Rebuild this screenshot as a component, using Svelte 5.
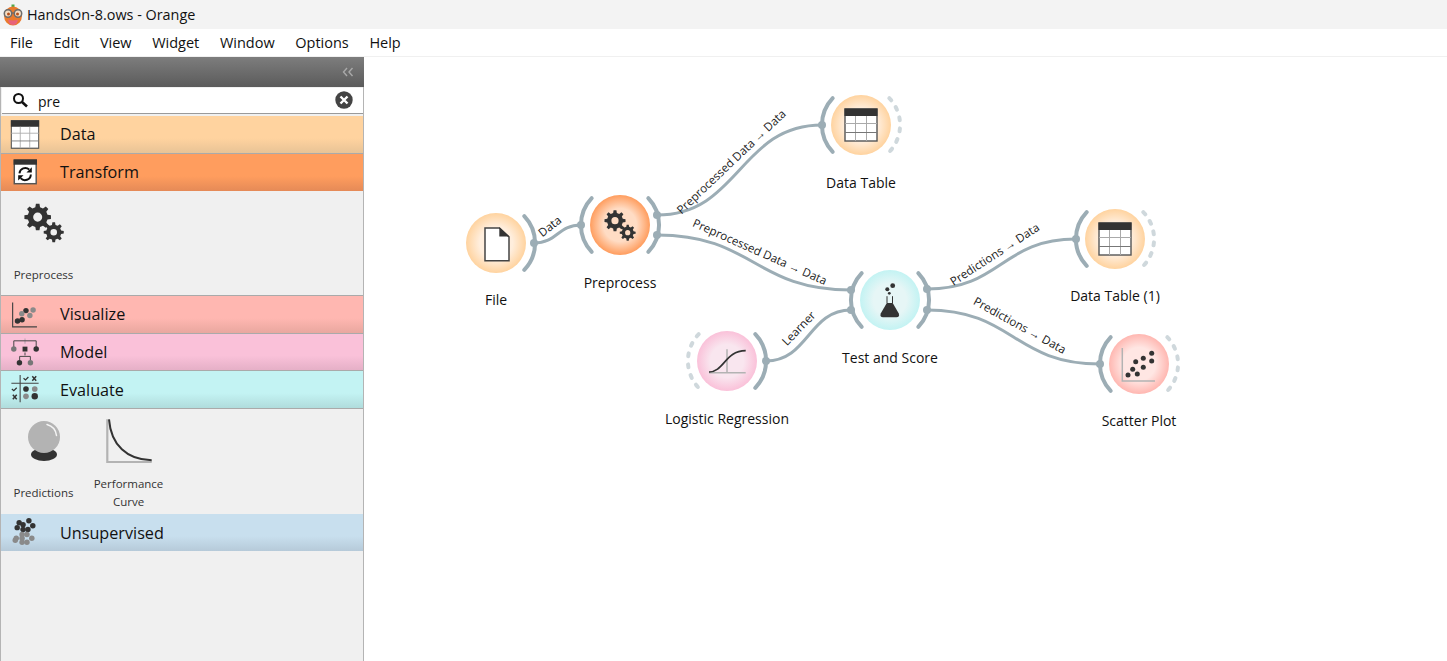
<script>
  const menus = ["File", "Edit", "View", "Widget", "Window", "Options", "Help"];

  const categories = [
    { name: "Data", cls: "data", items: [] },
    { name: "Transform", cls: "transform", items: [{ id: "gears", label: ["Preprocess"] }] },
    { name: "Visualize", cls: "visualize", items: [] },
    { name: "Model", cls: "model", items: [] },
    { name: "Evaluate", cls: "evaluate", items: [{ id: "ball", label: ["Predictions"] }, { id: "curve", label: ["Performance", "Curve"] }] },
    { name: "Unsupervised", cls: "unsupervised", items: [] }
  ];

  const nodes = [
    { id: "file", label: "File", x: 496, y: 243, ly: 300, color: "#ffd39f", light: "#ffeedd", left: null, right: "solid" },
    { id: "prep", label: "Preprocess", x: 620, y: 225, ly: 283, color: "#ff9d5e", light: "#ffdcc4", left: "solid", right: "solid" },
    { id: "table1", label: "Data Table", x: 861, y: 125, ly: 183, color: "#ffd39f", light: "#ffeedd", left: "solid", right: "dash" },
    { id: "score", label: "Test and Score", x: 890, y: 300, ly: 358, color: "#c3f3f3", light: "#e6f6f6", left: "solid", right: "solid" },
    { id: "logreg", label: "Logistic Regression", x: 727, y: 361, ly: 419, color: "#fac1d9", light: "#f9e6ef", left: "dash", right: "solid" },
    { id: "table2", label: "Data Table (1)", x: 1115, y: 239, ly: 296, color: "#ffd39f", light: "#ffeedd", left: "solid", right: "dash" },
    { id: "scatter", label: "Scatter Plot", x: 1139, y: 364, ly: 421, color: "#ffb7b1", light: "#ffe6e3", left: "solid", right: "dash" }
  ];

  const links = [
    { a: [534, 243], b: [581, 225], text: "Data", tx: 549.5, ty: 226, rot: -38 },
    { a: [657, 215], b: [822, 125], text: "Preprocessed Data → Data", tx: 731, ty: 161.5, rot: -43.5 },
    { a: [657, 235], b: [851, 290], text: "Preprocessed Data → Data", tx: 760, ty: 251.5, rot: 24 },
    { a: [766, 361], b: [851, 310], text: "Learner", tx: 798.5, ty: 328, rot: -46 },
    { a: [927, 289], b: [1076, 239], text: "Predictions → Data", tx: 994.5, ty: 254, rot: -33 },
    { a: [927, 310], b: [1100, 364], text: "Predictions → Data", tx: 1020, ty: 325, rot: 29 }
  ];

  function linkPath(l) {
    const dx = (l.b[0] - l.a[0]) / 2;
    return `M${l.a[0]} ${l.a[1]} C${l.a[0] + dx} ${l.a[1]} ${l.b[0] - dx} ${l.b[1]} ${l.b[0]} ${l.b[1]}`;
  }

  function arc(side) {
    const r = 39;
    const dx = (r * Math.cos(0.76)).toFixed(1);
    const dy = (r * Math.sin(0.76)).toFixed(1);
    const s = side === "right" ? 1 : -1;
    return `M${s * dx} ${-dy} A${r} ${r} 0 0 ${s > 0 ? 1 : 0} ${s * dx} ${dy}`;
  }

  // 8 tooth gear with a round hole
  function gear(cx, cy, ro, ri, hole) {
    let d = "";
    const n = 8;
    const step = (Math.PI * 2) / n;
    for (let i = 0; i < n; i++) {
      const a = i * step;
      const pts = [
        [ri, a - step * 0.3],
        [ro, a - step * 0.17],
        [ro, a + step * 0.17],
        [ri, a + step * 0.3]
      ];
      for (const [r, t] of pts) {
        d += `${d ? "L" : "M"}${(cx + r * Math.cos(t)).toFixed(2)} ${(cy + r * Math.sin(t)).toFixed(2)}`;
      }
    }
    d += `Z M${cx - hole} ${cy} a${hole} ${hole} 0 1 0 ${hole * 2} 0 a${hole} ${hole} 0 1 0 ${-hole * 2} 0Z`;
    return d;
  }

  const vizDots = [[17.3, 25.7, 1], [22, 24.3, 1], [26, 15, 1], [21.7, 18.3, 0], [30, 20, 0], [33.3, 14.3, 0]];
  const clusterDots = [
    [19, 9, 1], [29, 7, 1], [33, 12, 1], [23, 11, 1], [17, 14, 1], [23, 16, 1], [28, 16, 1],
    [22, 21, 0], [27, 21, 0], [16, 25, 0], [22, 25, 0], [27, 29, 0], [32, 25, 0], [22, 29, 0], [15, 27, 0]
  ];
  const scatterDots = [[-11, 11], [-6.3, 5.3], [-1.7, 10], [-3.3, -2.3], [4.3, 3.3], [4.3, -5.7], [12.7, -3], [12.7, -10.7]];
</script>

<svg class="defs" aria-hidden="true">
  <symbol id="gears" viewBox="-19 -21 38 38">
    <path d={gear(-5, -4.3, 10.6, 8, 3.6)} fill="#333" fill-rule="evenodd" />
    <path d={gear(7.7, 7.7, 8, 6, 2.6)} fill="#333" fill-rule="evenodd" />
  </symbol>
  <symbol id="table" viewBox="0 0 34 34">
    <rect x="1" y="1" width="32" height="32" fill="#fff" stroke="#555" stroke-width="1.4" />
    <rect x="0.5" y="0.5" width="33" height="7.5" fill="#333" />
    <path d="M11.5 8V33M22.5 8V33M1 15.5H33" stroke="#aaa" stroke-width="1" />
    <path d="M1 24.5H33" stroke="#777" stroke-width="1" />
  </symbol>
</svg>

{#snippet catIcon(name)}
  <svg class="cat-icon" viewBox="0 0 50 38">
    {#if name === "Data"}
      <use href="#table" x="10" y="4" width="30" height="30" />
    {:else if name === "Transform"}
      <rect x="14" y="6.500" width="22.500" height="24" fill="#fff" stroke="#555" stroke-width="1.500" />
      <rect x="13.300" y="5.500" width="24" height="5.500" fill="#333" />
      <path d="M19.300 19.800a6 6 0 0 1 10-3.800M31 21a6 6 0 0 1-10.500 3.800" fill="none" stroke="#111" stroke-width="2" />
      <path d="M32 13.500v5.500h-5.500zM18 27.300v-5.500h5.500z" fill="#111" />
    {:else if name === "Visualize"}
      <path d="M12.300 6.700V31.700H37.300" fill="none" stroke="#444" stroke-width="1.200" />
      {#each vizDots as [x, y, dark]}
        <circle cx={x} cy={y} r="2.800" fill={dark ? "#333" : "#8a8a8a"} />
      {/each}
    {:else if name === "Model"}
      <path d="M25 4.500V10" stroke="#bda6b2" stroke-width="1.200" />
      <path d="M13.500 15V7H36.500V15M25 19V22M19.500 27V23H30.500V27" fill="none" stroke="#444" stroke-width="1" />
      <circle cx="13.500" cy="15.500" r="2.800" fill="#777" />
      <rect x="22.500" y="13" width="5" height="5" fill="#333" />
      <circle cx="36.500" cy="15.500" r="2.800" fill="#333" />
      <circle cx="19.300" cy="29.500" r="2.800" fill="#333" />
      <circle cx="30.600" cy="29.500" r="2.800" fill="#777" />
    {:else if name === "Evaluate"}
      <path d="M20 4V32M11 12.500H39" stroke="#444" stroke-width="1.100" />
      <path d="M23.500 7.500l2 1.700 3-3M11.500 18.500l2 1.700 3-3" fill="none" stroke="#333" stroke-width="1.300" />
      <path d="M32.500 5.500l4 4.500M36.500 5.500l-4 4.500M12.500 24.500l4 4.500M16.500 24.500l-4 4.500" stroke="#333" stroke-width="1.500" />
      <circle cx="26" cy="18.500" r="2.900" fill="#333" />
      <circle cx="35" cy="18.500" r="2.900" fill="#8a8a8a" />
      <circle cx="26" cy="26" r="2.900" fill="#8a8a8a" />
      <circle cx="35" cy="26" r="3.300" fill="#333" />
    {:else}
      {#each clusterDots as [x, y, dark]}
        <circle cx={x} cy={y} r="2.800" fill={dark ? "#333" : "#8a8a8a"} />
      {/each}
    {/if}
  </svg>
{/snippet}

{#snippet itemIcon(id)}
  <svg class="item-icon" viewBox="0 0 48 48">
    {#if id === "gears"}
      <use href="#gears" x="0" y="-1" width="48" height="48" />
    {:else if id === "ball"}
      <ellipse cx="24" cy="39.500" rx="13" ry="6.500" fill="#333" />
      <circle cx="24" cy="22" r="16" fill="#b3b3b3" />
      <path d="M27 9.500a13 13 0 0 1 9.500 11" fill="none" stroke="#f4f4f4" stroke-width="1.500" stroke-linecap="round" />
    {:else}
      <path d="M2.300 4.300V47H46.700" fill="none" stroke="#b3b3b3" stroke-width="2.200" />
      <path d="M4 4.300C6 30 22 45 46.700 45.300" fill="none" stroke="#333" stroke-width="2" />
    {/if}
  </svg>
{/snippet}

{#snippet nodeIcon(id)}
  {#if id === "file"}
    <path d="M-11 -15H3.500L13 -6V17.800H-11Z" fill="#fff" stroke="#444" stroke-width="1.500" />
    <path d="M3.300 -15.700L13.700 -6.500H3.300Z" fill="#333" />
  {:else if id === "prep"}
    <use href="#gears" x="-19" y="-21" width="38" height="38" />
  {:else if id === "table1" || id === "table2"}
    <use href="#table" x="-17" y="-17" width="34" height="34" />
  {:else if id === "score"}
    <circle cx="-2.700" cy="-10.700" r="2" fill="#333" />
    <circle cx="2.700" cy="-14.300" r="2.400" fill="#333" />
    <circle cx="-0.700" cy="-6.700" r="1.400" fill="#333" />
    <path d="M-3 -3.800V3M2.500 -3.800V3" stroke="#333" stroke-width="1" />
    <path d="M-3.200 3L-9.300 13.500Q-10.500 17.300 -7 17.300H6.500Q10 17.300 8.800 13.500L2.700 3Z" fill="#333" />
  {:else if id === "logreg"}
    <path d="M-18 11.700H18.700M0 -11.700V11.700" stroke="#b3b3b3" stroke-width="1.500" fill="none" />
    <path d="M-18 11C-3 11 -2 -10.300 18.700 -10.300" fill="none" stroke="#333" stroke-width="1.700" />
  {:else if id === "scatter"}
    <path d="M-16.700 -16V17H16" fill="none" stroke="#b3b3b3" stroke-width="1.500" />
    {#each scatterDots as [x, y]}
      <circle cx={x} cy={y} r="2.500" fill="#333" />
    {/each}
  {/if}
{/snippet}

<div class="window">
  <header class="titlebar">
    <svg class="logo" viewBox="0 0 22 22">
      <path d="M11 3V0.500" stroke="#4fa84a" stroke-width="3" />
      <ellipse cx="11" cy="12" rx="9" ry="9.500" fill="#ea7a2c" />
      <path d="M6 15.500q5 2 10 0q-1 5.500-5 5.500t-5-5.500z" fill="#e8637a" />
      <circle cx="6" cy="9.500" r="3.700" fill="#f6dcc0" stroke="#6b6b6b" stroke-width="1.500" />
      <circle cx="16" cy="9.500" r="3.700" fill="#f6dcc0" stroke="#6b6b6b" stroke-width="1.500" />
      <path d="M9.700 9H12.300" stroke="#6b6b6b" stroke-width="1.200" />
      <circle cx="6.500" cy="10" r="1.500" fill="#b4501c" />
      <circle cx="15.500" cy="10" r="1.500" fill="#b4501c" />
    </svg>
    <span>HandsOn-8.ows - Orange</span>
  </header>

  <nav class="menubar">
    {#each menus as m}
      <span>{m}</span>
    {/each}
  </nav>

  <div class="main">
    <aside class="dock">
      <div class="dock-head">
        <svg class="collapse" viewBox="0 0 12 10">
          <path d="M5 1L1.500 5L5 9M10.500 1L7 5L10.500 9" fill="none" stroke="#a9a9a9" stroke-width="1.400" />
        </svg>
      </div>
      <div class="search">
        <svg class="search-icon" viewBox="0 0 16 16">
          <circle cx="6.500" cy="6.500" r="4.500" fill="none" stroke="#111" stroke-width="2" />
          <path d="M10 10L15 14.500" stroke="#111" stroke-width="2.600" />
        </svg>
        <span class="query">pre</span>
        <svg class="clear" viewBox="0 0 18 18">
          <circle cx="9" cy="9" r="8.700" fill="#444" />
          <path d="M5.500 5.500L12.500 12.500M12.500 5.500L5.500 12.500" stroke="#fff" stroke-width="2.400" />
        </svg>
      </div>

      {#each categories as c}
        <div class="cat {c.cls}">
          {@render catIcon(c.name)}
          <span>{c.name}</span>
        </div>
        {#if c.items.length}
          <div class="items">
            {#each c.items as it}
              <div class="item">
                {@render itemIcon(it.id)}
                <div class="item-label">
                  {#each it.label as line}
                    <span>{line}</span>
                  {/each}
                </div>
              </div>
            {/each}
          </div>
        {/if}
      {/each}
    </aside>

    <svg class="canvas" viewBox="364 57 1083 604">
      <defs>
        {#each nodes as n}
          <radialGradient id="g-{n.id}">
            <stop offset="0" stop-color={n.light} />
            <stop offset="0.55" stop-color={n.light} />
            <stop offset="1" stop-color={n.color} />
          </radialGradient>
        {/each}
      </defs>

      {#each links as l}
        <path class="link" d={linkPath(l)} />
        <circle class="anchor" cx={l.a[0]} cy={l.a[1]} r="4" />
        <circle class="anchor" cx={l.b[0]} cy={l.b[1]} r="4" />
        <text class="link-label" transform="translate({l.tx} {l.ty}) rotate({l.rot})">{l.text}</text>
      {/each}

      {#each nodes as n}
        <g transform="translate({n.x} {n.y})">
          <circle r="30" fill="url(#g-{n.id})" />
          {#if n.left}
            <path class={n.left === "solid" ? "port" : "port-free"} d={arc("left")} />
          {/if}
          {#if n.right}
            <path class={n.right === "solid" ? "port" : "port-free"} d={arc("right")} />
          {/if}
          {@render nodeIcon(n.id)}
        </g>
        <text class="node-label" x={n.x} y={n.ly + 5}>{n.label}</text>
      {/each}
    </svg>
  </div>
</div>

<style>
  :global(body) {
    margin: 0;
    overflow: hidden;
    font-family: "Open Sans", "Noto Sans", sans-serif;
    color: #111;
  }

  .defs {
    position: absolute;
    width: 0;
    height: 0;
  }

  .window {
    display: flex;
    flex-direction: column;
    height: 661px;
    background: #fff;
  }

  .titlebar {
    height: 29px;
    background: #f3f3f3;
    display: flex;
    align-items: center;
    gap: 3px;
    padding-left: 2px;
    font-size: 14.400px;
    flex: none;
  }

  .logo {
    width: 22px;
    height: 22px;
  }

  .menubar {
    height: 27px;
    border-bottom: 1px solid #f0f0f0;
    display: flex;
    align-items: center;
    gap: 20.600px;
    padding-left: 10px;
    font-size: 14.500px;
    flex: none;
  }

  .main {
    flex: 1;
    display: flex;
    min-height: 0;
  }

  .dock {
    width: 362px;
    flex: none;
    background: #f0f0f0;
    border-left: 1px solid #b4b4b4;
    border-right: 1px solid #b4b4b4;
    display: flex;
    flex-direction: column;
  }

  .dock-head {
    height: 30px;
    margin-left: -1px;
    margin-right: -1px;
    background: linear-gradient(#7d7d7d, #5b5b5b);
    display: flex;
    align-items: center;
    justify-content: flex-end;
    padding-right: 10px;
    flex: none;
  }

  .collapse {
    width: 12px;
    height: 10px;
  }

  .search {
    height: 25px;
    margin: 1px 0 2px 1px;
    background: #fff;
    border-bottom: 1px solid #9a9a9a;
    display: flex;
    align-items: center;
    font-size: 14px;
    flex: none;
  }

  .search-icon {
    width: 16px;
    height: 16px;
    margin-left: 10px;
    margin-top: -2px;
  }

  .query {
    margin-left: 10px;
    padding-top: 2px;
    flex: 1;
  }

  .clear {
    width: 18px;
    height: 18px;
    margin-right: 10px;
    margin-top: -1px;
  }

  .cat {
    height: 37px;
    border-bottom: 1px solid #aaa;
    display: flex;
    align-items: center;
    font-size: 16.200px;
    flex: none;
  }

  .cat span {
    margin-left: 10px;
  }

  .data span,
  .transform span,
  .visualize span {
    margin-top: -2px;
  }

  .cat-icon {
    width: 50px;
    height: 37px;
    margin-left: -1px;
    flex: none;
  }

  .data { background: linear-gradient(#ffd39f 60%, #e8c396); }
  .transform { background: linear-gradient(#ff9d5e 60%, #e58a57); border-bottom: none; }
  .visualize { background: linear-gradient(#ffb7b1 60%, #e9a79f); }
  .model { background: linear-gradient(#fac1d9 60%, #e5b0c7); height: 36px; }
  .evaluate { background: linear-gradient(#c3f3f3 60%, #b0dcdc); }
  .unsupervised { background: linear-gradient(#c8dfee 60%, #b6cad9); border-bottom: none; }

  .items {
    height: 105px;
    display: flex;
    border-bottom: 1px solid #aaa;
    box-sizing: border-box;
    flex: none;
  }

  .evaluate + .items {
    border-bottom: none;
  }

  .item {
    width: 85px;
    display: flex;
    flex-direction: column;
    align-items: center;
    padding-top: 6px;
    box-sizing: border-box;
  }

  .item-icon {
    width: 48px;
    height: 48px;
    flex: none;
  }

  .item-label {
    height: 42px;
    margin-top: 9px;
    display: flex;
    flex-direction: column;
    justify-content: center;
    align-items: center;
    font-size: 11.500px;
    line-height: 18px;
    color: #333;
  }

  .canvas {
    flex: 1;
    min-width: 0;
    height: 604px;
    display: block;
  }

  .link {
    fill: none;
    stroke: #9cadb5;
    stroke-width: 3;
  }

  .anchor {
    fill: #9cadb5;
  }

  .port {
    fill: none;
    stroke: #9cadb5;
    stroke-width: 4;
    stroke-linecap: round;
  }

  .port-free {
    fill: none;
    stroke: #cfd8dc;
    stroke-width: 4;
    stroke-linecap: round;
    stroke-dasharray: 3 8;
  }

  .link-label {
    font-size: 11.600px;
    text-anchor: middle;
    dominant-baseline: central;
    fill: #222;
  }

  .node-label {
    font-size: 14px;
    text-anchor: middle;
    fill: #111;
  }
</style>
